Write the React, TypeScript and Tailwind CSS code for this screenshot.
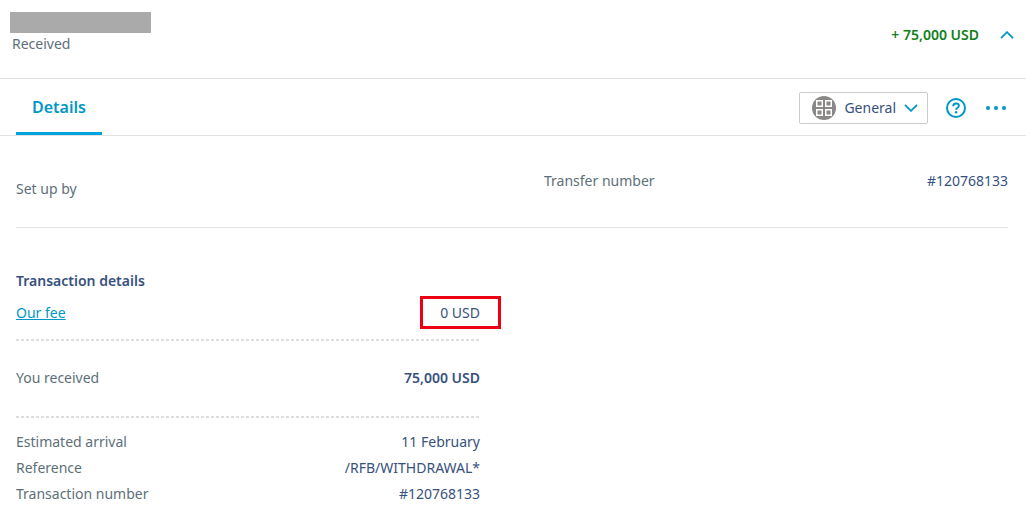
import type { ReactNode } from "react";

type RowProps = {
  label: ReactNode;
  value: ReactNode;
};

const ARRIVAL_ROWS = [
  { label: "Estimated arrival", value: "11 February" },
  { label: "Reference", value: "/RFB/WITHDRAWAL*" },
  { label: "Transaction number", value: "#120768133" },
];

function DetailRow({ label, value }: RowProps) {
  return (
    <div className="flex items-start justify-between">
      <dt>{label}</dt>
      <dd className="text-[#37517e]">{value}</dd>
    </div>
  );
}

// Finer dashes than the browser's own dashed border
function DashedRule() {
  return (
    <div className="h-[2px] bg-[repeating-linear-gradient(90deg,#dedede_0px,#dedede_3px,transparent_3px,transparent_5px)]" />
  );
}

function Chevron({ up = false }: { up?: boolean }) {
  return (
    <svg
      width="14"
      height="8"
      viewBox="0 0 14 8"
      fill="none"
      stroke="#0097c7"
      strokeWidth="1.8"
      aria-hidden="true"
      className={up ? "rotate-180" : "pointer-events-none"}
    >
      <path d="M1 .8l6 6 6-6" />
    </svg>
  );
}

function CategoryIcon() {
  return (
    <svg width="24" height="24" viewBox="0 0 24 24" aria-hidden="true" className="shrink-0">
      <circle cx="12" cy="12" r="12" fill="#8a8787" />
      <g fill="none" stroke="#fff" strokeWidth="1.5">
        <rect x="4.75" y="4.75" width="5.5" height="5.5" />
        <rect x="13.75" y="4.75" width="5.5" height="5.5" />
        <rect x="4.75" y="13.75" width="5.5" height="5.5" />
        <rect x="13.75" y="13.75" width="5.5" height="5.5" />
      </g>
    </svg>
  );
}

function HelpIcon() {
  return (
    <svg width="20" height="20" viewBox="0 0 20 20" fill="none" stroke="#0097c7" aria-hidden="true">
      <circle cx="10" cy="10" r="9" strokeWidth="2" />
      <path d="M7.2 8.3C7.2 6.5 8.4 5.5 10.1 5.5s2.8 1 2.8 2.4c0 1.9-2.8 1.7-2.8 3.8" strokeWidth="1.9" />
      <circle cx="10.1" cy="14.2" r="1.2" fill="#0097c7" stroke="none" />
    </svg>
  );
}

function MoreIcon() {
  return (
    <svg width="20" height="4" viewBox="0 0 20 4" fill="#0097c7" aria-hidden="true">
      <circle cx="2" cy="2" r="2" />
      <circle cx="10" cy="2" r="2" />
      <circle cx="18" cy="2" r="2" />
    </svg>
  );
}

export default function App() {
  return (
    <main className="bg-white pb-5 font-['Noto_Sans',sans-serif] text-sm leading-[26px] text-[#5d7079]">
      <header className="flex items-start justify-between border-b border-[#e2e2e2] pt-3 pr-3 pb-5 pl-[10px]">
        <div>
          <div className="h-[21px] w-[141px] bg-[#aaaaaa]" />
          <p className="pl-[2px] leading-[22px]">Received</p>
        </div>
        <div className="flex h-[46px] items-center gap-[21px]">
          <span className="font-semibold text-[#10801b]">+ 75,000 USD</span>
          <button type="button" aria-label="Collapse">
            <Chevron up />
          </button>
        </div>
      </header>

      <div className="flex items-stretch justify-between border-b border-[#e2e2e2] pr-5 pl-4">
        <div role="tablist" className="flex">
          <button
            type="button"
            role="tab"
            aria-selected="true"
            className="h-14 border-b-[3px] border-[#00a2dd] px-4 pt-[2px] text-base font-semibold text-[#0097c7]"
          >
            Details
          </button>
        </div>
        <div className="flex items-center pt-[2px]">
          <div className="flex h-8 items-center rounded-[2px] border border-[#c9cbce] pr-[9px] pl-3">
            <CategoryIcon />
            <select
              aria-label="Category"
              defaultValue="General"
              className="-mr-4 field-sizing-content appearance-none bg-transparent pr-6 pl-2 text-[#37517e] outline-none"
            >
              <option>General</option>
            </select>
            <Chevron />
          </div>
          <button type="button" aria-label="Help" className="ml-[18px]">
            <HelpIcon />
          </button>
          <button type="button" aria-label="More actions" className="ml-5 flex h-5 items-center">
            <MoreIcon />
          </button>
        </div>
      </div>

      <div className="pr-[18px] pl-4">
        <dl className="grid grid-cols-2 gap-16 border-b border-[#e2e2e2] pt-8 pb-[25px]">
          <div className="pt-2">
            <dt>Set up by</dt>
          </div>
          <DetailRow label="Transfer number" value="#120768133" />
        </dl>

        <div className="grid grid-cols-2 gap-16 pt-10">
          <section>
            <h2 className="font-semibold text-[#37517e]">Transaction details</h2>
            <dl>
              <div className="pt-[6px] pb-[13px]">
                <DetailRow
                  label={
                    <a href="#fee" className="text-[#0097c7] underline">
                      Our fee
                    </a>
                  }
                  value={
                    <span className="relative">
                      0 USD
                      {/* highlight frame around the fee */}
                      <span className="pointer-events-none absolute -top-[7px] -right-[21px] -bottom-[7px] -left-5 border-3 border-[#ed0014]" />
                    </span>
                  }
                />
              </div>
              <DashedRule />
              <div className="pt-6 pb-[25px]">
                <DetailRow label="You received" value={<strong className="font-semibold">75,000 USD</strong>} />
              </div>
              <DashedRule />
              <div className="pt-[11px]">
                {ARRIVAL_ROWS.map((row) => (
                  <DetailRow key={row.label} label={row.label} value={row.value} />
                ))}
              </div>
            </dl>
          </section>
        </div>
      </div>
    </main>
  );
}
